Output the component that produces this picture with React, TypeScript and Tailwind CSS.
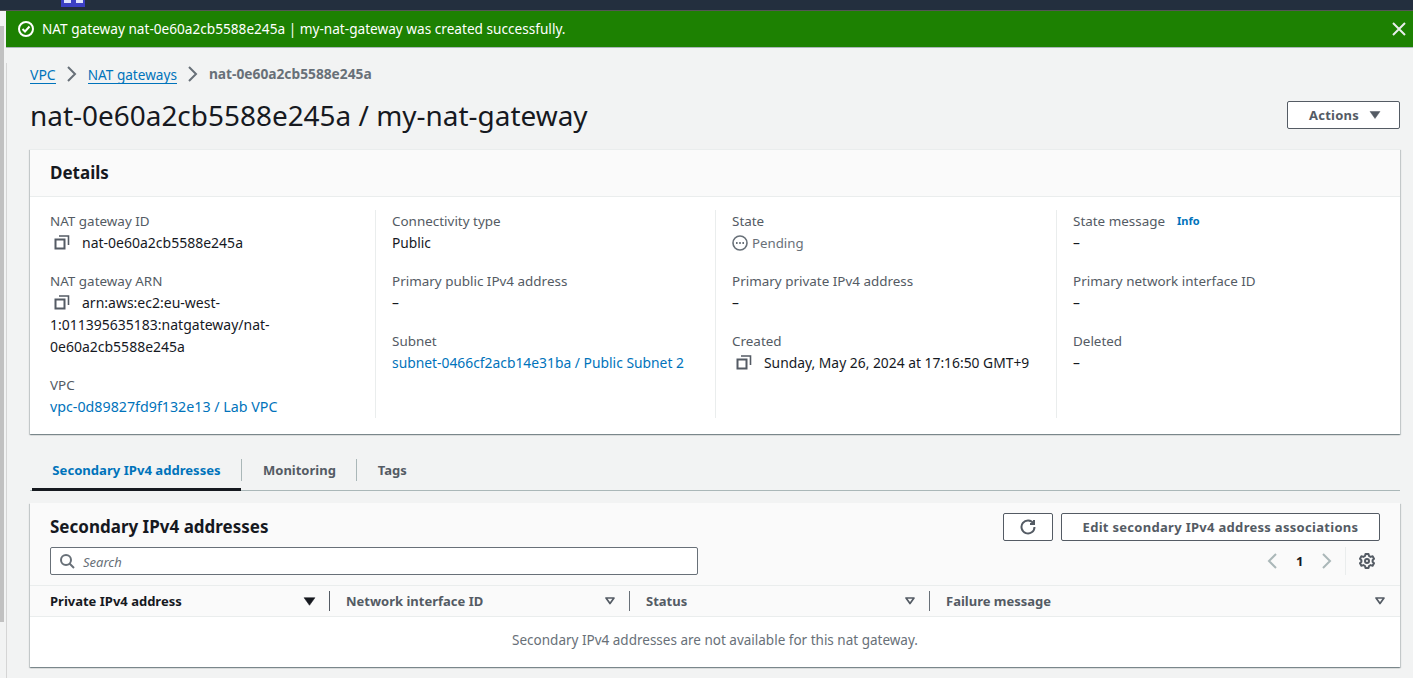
import React from 'react';

const CopyIcon = () => (
  <svg width="16" height="16" viewBox="0 0 16 16" fill="none" stroke="#545b64" strokeWidth="2" className="shrink-0">
    <path d="M1.5 5.5h9v9h-9z" />
    <path d="M5 2h9.5v9" strokeWidth="1.6" />
  </svg>
);

const Caret = ({ filled = true, color = '#545b64', size = 12 }: { filled?: boolean; color?: string; size?: number }) => (
  <svg width={size} height={size} viewBox="0 0 12 12" className="shrink-0">
    <path d={filled ? 'M1 2.500h10L6 9.500z' : 'M2 3h8L6 8.500z'} fill={filled ? color : 'none'} stroke={color} strokeWidth={filled ? 0.5 : 1.7} strokeLinejoin="round" />
  </svg>
);

const Chevron = ({ dir, color, size = 16 }: { dir: 'left' | 'right'; color: string; size?: number }) => (
  <svg width={size} height={size} viewBox="0 0 16 16" fill="none" stroke={color} strokeWidth="2" className="shrink-0">
    <path d={dir === 'right' ? 'M4 1 11 8 4 15' : 'M12 1 5 8 12 15'} />
  </svg>
);

const Field = ({ label, children, extra }: { label: string; children: React.ReactNode; extra?: React.ReactNode }) => (
  <div>
    <div className="flex items-center text-[13.45px] text-[#545b64]">
      {label}
      {extra}
    </div>
    <div className="text-[13.75px] text-[#16191f]">{children}</div>
  </div>
);

const Link = ({ children, wide }: { children: React.ReactNode; wide?: boolean }) => (
  <a className={wide ? 'text-[14.25px] text-[#0073bb]' : 'text-[13.85px] text-[#0073bb]'}>{children}</a>
);

const Copyable = ({ children, narrow }: { children: React.ReactNode; narrow?: boolean }) => (
  <span className={narrow ? 'text-[13.85px]' : 'text-[14px]'}>
    <span className="inline-block align-[-2px] ml-1 mr-3 w-4"><CopyIcon /></span>
    {children}
  </span>
);

const Column = ({ first, children }: { first?: boolean; children: React.ReactNode }) => (
  <div className={first ? 'flex flex-col gap-4 pr-5' : 'flex flex-col gap-4 border-l border-[#eaeded] pl-4 pr-2'}>{children}</div>
);

const HeaderCell = ({ label, width, active, last }: { label: string; width: string; active?: boolean; last?: boolean }) => (
  <div className={`${width} flex items-center justify-between h-[30px] font-bold ${active ? 'text-[#16191f]' : 'text-[#545b64]'}`}>
    <span>{label}</span>
    <div className="flex items-center h-5">
      <span className={last ? 'mr-0' : 'mr-[13px]'}>
        <Caret filled={!!active} color={active ? '#16191f' : '#545b64'} size={active ? 13 : 12} />
      </span>
      {!last && <span className={`h-5 w-px ${active ? 'bg-[#545b64]' : 'bg-[#687078]'}`} />}
    </div>
  </div>
);

export default function App() {
  return (
    <div className="h-[678px] w-[1413px] overflow-hidden bg-[#f2f3f3] text-[13px] leading-[22px] text-[#16191f] font-['Noto_Sans','Open_Sans',sans-serif]">
      <div className="relative h-[11px] bg-[#232f3e] border-b border-[#555]">
        <div className="absolute left-[61px] top-0 flex h-[7px] w-6 items-start justify-center gap-[5px] bg-[#3b3fc4]">
          <span className="h-[3px] w-[7px] bg-[#dfe3ff]" />
          <span className="h-[3px] w-[7px] bg-[#dfe3ff]" />
        </div>
      </div>
      <div className="flex h-[667px]">
        <div className="w-[6px] shrink-0 bg-[#f2f3f3] pt-[15px]">
          <div className="h-[596px] w-1 bg-[#c1c1c1]" />
        </div>
        <div className="flex-1 min-w-0">
          <div className="flex h-[37px] items-center justify-between border-b border-[#aab7b8] bg-[#1d8102] pl-3 pr-[6px] text-[13.63px] text-white">
            <div className="flex items-center gap-[8px]">
              <svg width="16" height="16" viewBox="0 0 16 16" fill="none" stroke="#fff" strokeWidth="2">
                <circle cx="8" cy="8" r="7" />
                <path d="M4.500 8 7 10.500 11.500 5.500" />
              </svg>
              <span>NAT gateway nat-0e60a2cb5588e245a | my-nat-gateway was created successfully.</span>
            </div>
            <svg width="16" height="16" viewBox="0 0 16 16" fill="none" stroke="#eaeded" strokeWidth="2">
              <path d="M2 2l12 12M14 2 2 14" />
            </svg>
          </div>

          <div className="h-[630px] border-l border-[#d5d5d5] pl-[23px] pr-[13px]">
            <div className="flex h-[22px] items-center pt-0 mt-[15px]">
              <a className="text-[14px] text-[#0073bb] border-b border-[#0073bb] leading-[17px] mt-0.5">VPC</a>
              <span className="mx-2"><Chevron dir="right" color="#687078" /></span>
              <a className="text-[13.6px] text-[#0073bb] border-b border-[#0073bb] leading-[17px] mt-0.5">NAT gateways</a>
              <span className="mx-2"><Chevron dir="right" color="#687078" /></span>
              <span className="font-bold text-[#687078] text-[13.75px]">nat-0e60a2cb5588e245a</span>
            </div>

            <div className="flex items-center justify-between mt-[10px] h-[40px]">
              <h1 className="text-[27.95px] leading-[40px] text-[#16191f]">nat-0e60a2cb5588e245a / my-nat-gateway</h1>
              <button className="flex h-7 w-[113px] items-center gap-[10px] rounded-[2px] border border-[#545b64] bg-white pl-[21px] font-bold tracking-[0.25px] text-[#545b64]">
                Actions <Caret />
              </button>
            </div>

            <section className="mt-[14px] border-t border-[#eaeded] bg-white shadow-[0_1px_1px_0_rgba(0,28,36,0.3),1px_1px_1px_0_rgba(0,28,36,0.15),-1px_1px_1px_0_rgba(0,28,36,0.15)]">
              <div className="flex h-[47px] items-center border-b border-[#eaeded] bg-[#fafafa] px-5">
                <h2 className="text-[17px] font-bold leading-[22px]">Details</h2>
              </div>
              <div className="grid grid-cols-[325px_340px_341px_1fr] px-5 pt-[13px] pb-4">
                <Column first>
                  <Field label="NAT gateway ID"><Copyable>nat-0e60a2cb5588e245a</Copyable></Field>
                  <Field label="NAT gateway ARN"><Copyable>arn:aws:ec2:eu-west-1:011395635183:natgateway/nat-0e60a2cb5588e245a</Copyable></Field>
                  <Field label="VPC"><Link wide>vpc-0d89827fd9f132e13 / Lab VPC</Link></Field>
                </Column>
                <Column>
                  <Field label="Connectivity type">Public</Field>
                  <Field label="Primary public IPv4 address">–</Field>
                  <Field label="Subnet"><Link>subnet-0466cf2acb14e31ba / Public Subnet 2</Link></Field>
                </Column>
                <Column>
                  <Field label="State">
                    <span className="flex items-center gap-1 text-[13.25px] text-[#687078]">
                      <svg width="16" height="16" viewBox="0 0 16 16" fill="none" stroke="#687078" strokeWidth="1.600">
                        <circle cx="8" cy="8" r="7" />
                        <path d="M4 8h1.600M7.200 8h1.600M10.400 8H12" strokeWidth="2" />
                      </svg>
                      Pending
                    </span>
                  </Field>
                  <Field label="Primary private IPv4 address">–</Field>
                  <Field label="Created"><Copyable narrow>Sunday, May 26, 2024 at 17:16:50 GMT+9</Copyable></Field>
                </Column>
                <Column>
                  <Field label="State message" extra={<a className="ml-3 text-[11px] font-bold text-[#0073bb]">Info</a>}>–</Field>
                  <Field label="Primary network interface ID">–</Field>
                  <Field label="Deleted">–</Field>
                </Column>
              </div>
            </section>

            <div className="mt-[22px] flex h-[35px] border-b border-[#aab7b8] font-bold">
              <div className="ml-0.5 flex h-[35px] w-[209px] items-start justify-center border-b-[3px] border-[#16191f] pt-[3px] text-[13.1px] text-[#0073bb]">Secondary IPv4 addresses</div>
              <div className="mt-[3px] flex h-[22px] items-center border-l border-[#aab7b8] pl-[21px] pr-5 text-[#545b64]">Monitoring</div>
              <div className="mt-[3px] flex h-[22px] items-center border-l border-[#aab7b8] px-[21px] text-[#545b64]">Tags</div>
            </div>

            <section className="mt-3 bg-white shadow-[0_1px_1px_0_rgba(0,28,36,0.3),1px_1px_1px_0_rgba(0,28,36,0.15),-1px_1px_1px_0_rgba(0,28,36,0.15)]">
              <div className="bg-[#fafafa] pl-5 pr-5 pt-2.5">
                <div className="flex items-center justify-between">
                  <h2 className="text-[17px] font-bold leading-[28px]">Secondary IPv4 addresses</h2>
                  <div className="flex gap-2">
                    <button className="flex h-7 w-[50px] items-center justify-center rounded-[2px] border border-[#545b64] bg-white">
                      <svg width="16" height="16" viewBox="0 0 16 16" fill="none" stroke="#545b64" strokeWidth="2">
                        <path d="M13.500 4.500A6.500 6.500 0 1 0 14.500 8" />
                        <path d="M14 1v4h-4" />
                      </svg>
                    </button>
                    <button className="flex h-7 w-[319px] items-center justify-center rounded-[2px] border border-[#545b64] bg-white font-bold tracking-[0.3px] text-[#545b64]">
                      Edit secondary IPv4 address associations
                    </button>
                  </div>
                </div>
                <div className="flex h-[38px] items-start justify-between mt-1.5">
                  <div className="flex h-7 w-[648px] items-center gap-2 rounded-[2px] border border-[#687078] bg-white pl-2">
                    <svg width="16" height="16" viewBox="0 0 16 16" fill="none" stroke="#687078" strokeWidth="2">
                      <circle cx="7" cy="7" r="5" />
                      <path d="M10.500 10.500 15 15" />
                    </svg>
                    <span className="mt-0.5 italic text-[#687078]">Search</span>
                  </div>
                  <div className="flex h-7 items-center">
                    <Chevron dir="left" color="#aab7b8" />
                    <span className="ml-4 mr-[17px] w-[6px] text-center font-bold">1</span>
                    <Chevron dir="right" color="#aab7b8" />
                    <span className="ml-[10px] h-7 w-px bg-[#eaeded]" />
                    <span className="ml-[13px] mr-[5px]">
                      <svg width="16" height="16" viewBox="0 0 16 16" fill="none" stroke="#545b64" strokeWidth="2" className="block">
                        <path d="M6.500 1h3l.5 2 1.600.9 2-.6 1.400 2.500-1.400 1.400v1.600l1.400 1.400-1.400 2.500-2-.6-1.600.9-.5 2h-3l-.5-2-1.600-.9-2 .6L1 10.200l1.400-1.400V7.200L1 5.800l1.400-2.500 2 .6L6 3z" strokeLinejoin="round" />
                        <circle cx="8" cy="8" r="2" />
                      </svg>
                    </span>
                  </div>
                </div>
              </div>
              <div className="flex border-y border-[#eaeded] bg-[#fafafa] pl-5 pr-3.5 text-[13px]">
                <HeaderCell label="Private IPv4 address" width="w-[280px]" active />
                <div className="w-4" />
                <HeaderCell label="Network interface ID" width="w-[284px]" />
                <div className="w-4" />
                <HeaderCell label="Status" width="w-[284px]" />
                <div className="w-4" />
                <HeaderCell label="Failure message" width="flex-1" last />
              </div>
              <div className="flex h-[50px] items-center justify-center pb-1 text-[13.5px] text-[#687078]">
                Secondary IPv4 addresses are not available for this nat gateway.
              </div>
            </section>
          </div>
        </div>
      </div>
    </div>
  );
}
